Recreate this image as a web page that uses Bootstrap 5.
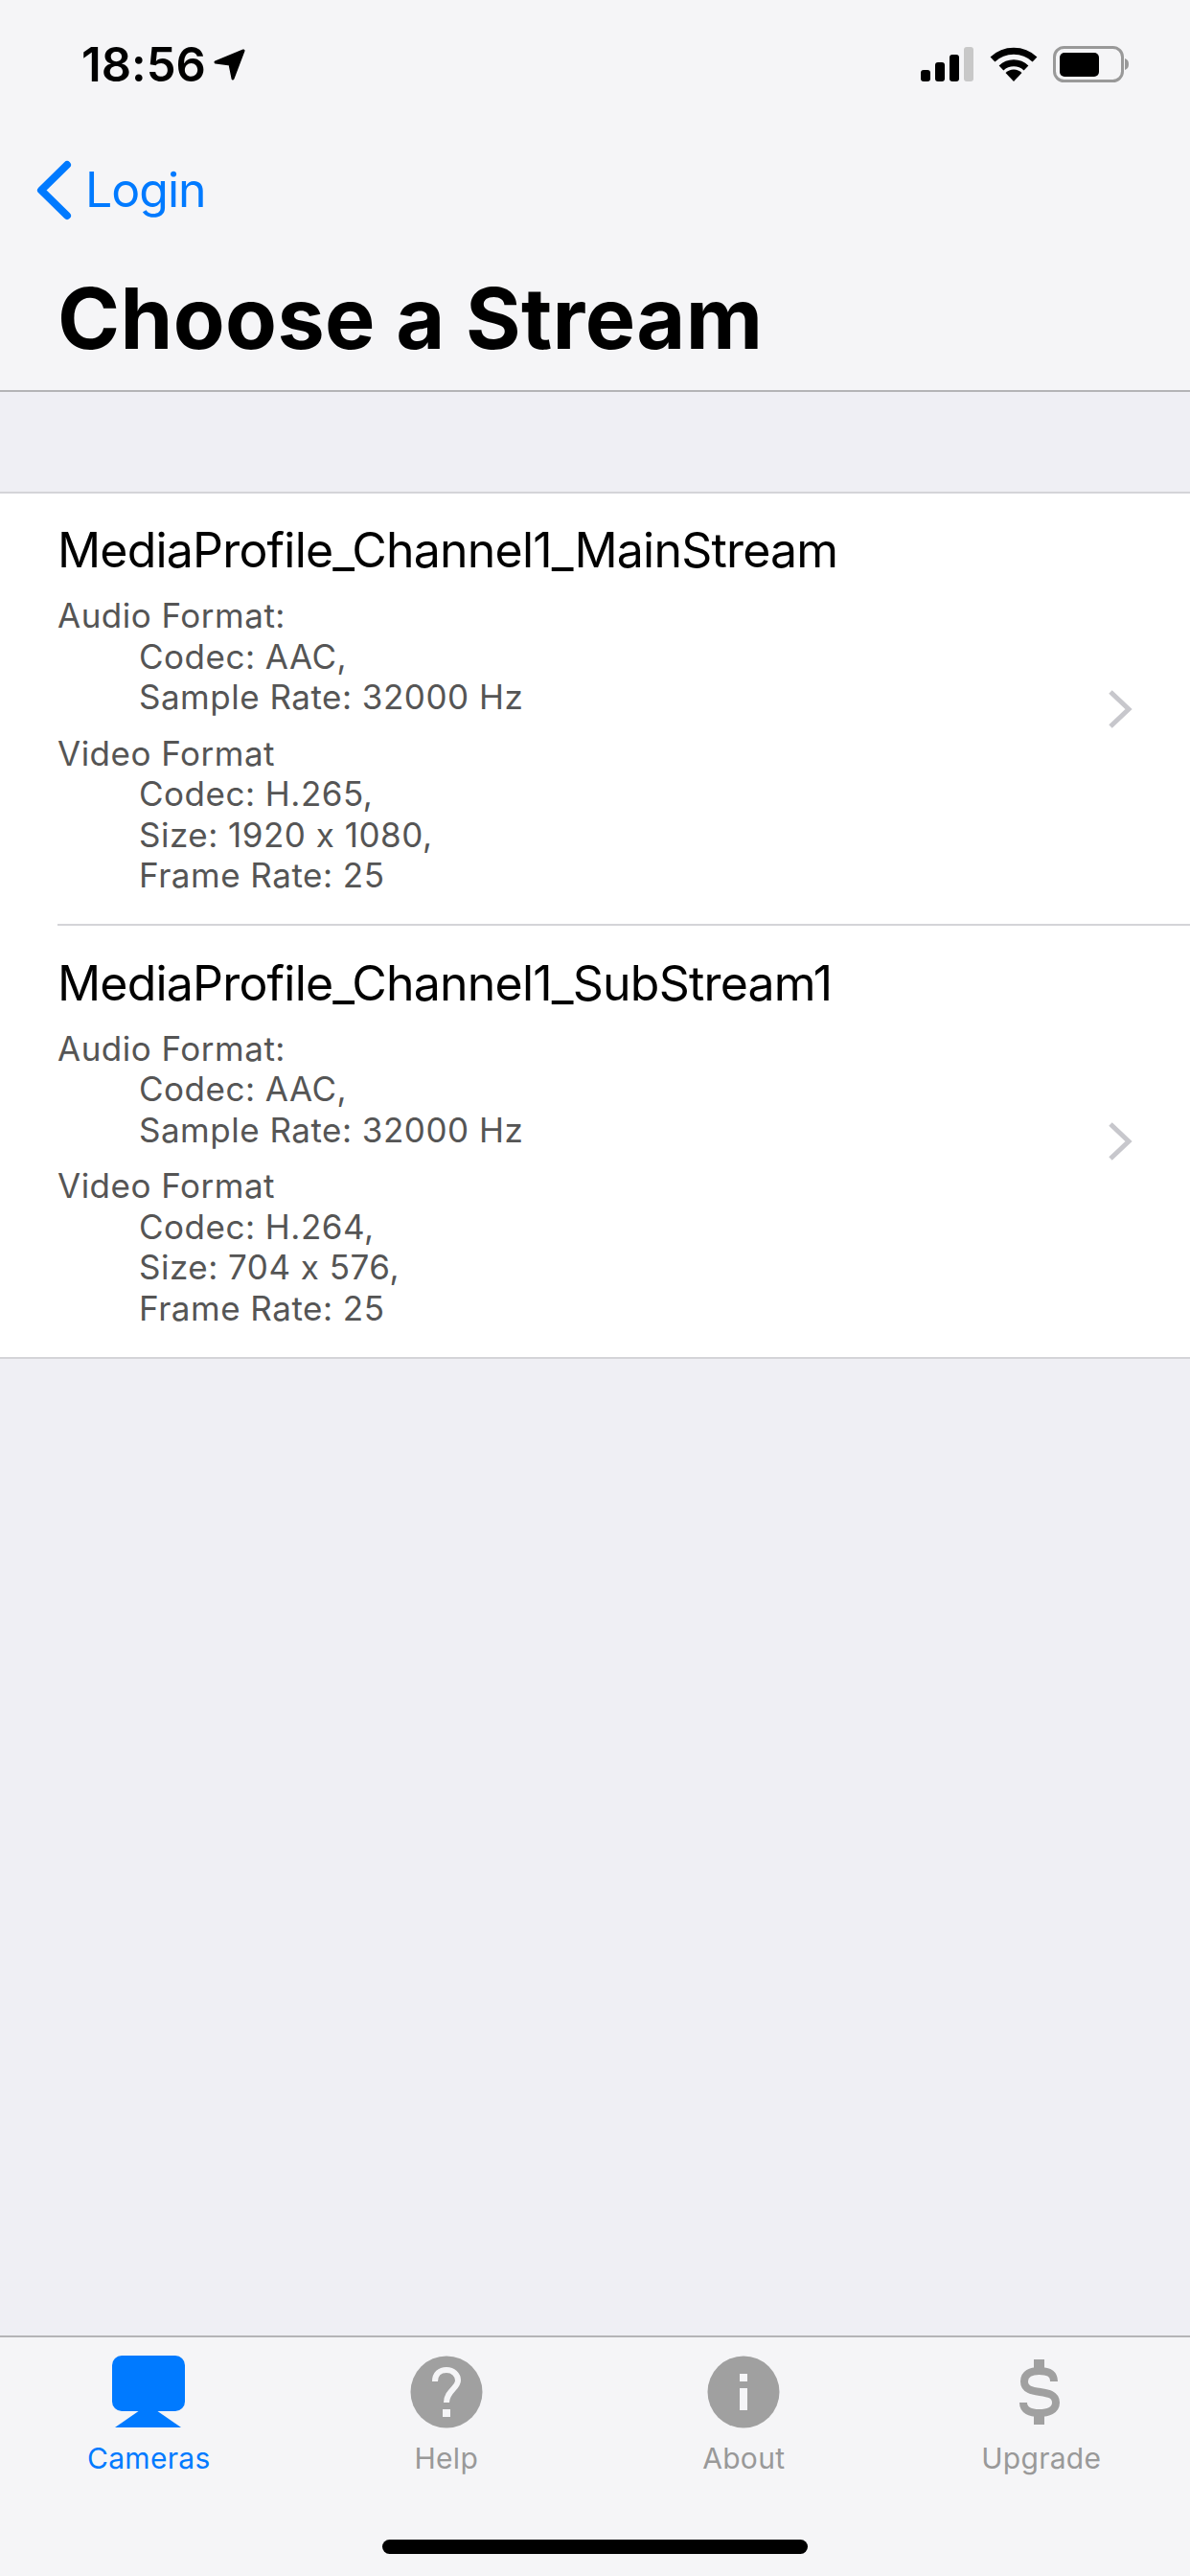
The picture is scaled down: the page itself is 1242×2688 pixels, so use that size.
<!DOCTYPE html>
<html lang="en">

<head>
  <meta charset="UTF-8">
  <title>Choose a Stream</title>
  <link href="https://cdn.jsdelivr.net/npm/bootstrap@5.3.3/dist/css/bootstrap.min.css" rel="stylesheet">
  <style>
    body {
      font-family: Inter, "Liberation Sans", sans-serif;
      font-feature-settings: "calt" 0;
      background-color: #efeff4;
      color: #000;
    }

    .screen {
      width: 1242px;
      height: 2688px;
      overflow: hidden;
    }

    .top-bar {
      background-color: #f5f5f7;
      border-bottom: 2px solid #b4b4b6;
      height: 409px;
    }

    .status-row {
      height: 134px;
      padding: 0 63px 0 85px;
    }

    .clock {
      font-size: 49px;
      font-weight: 600;
      letter-spacing: 0;
      line-height: 1;
    }

    .back-row {
      height: 128px;
      padding-left: 38px;
    }

    .back-link {
      color: #007aff;
      font-size: 50px;
      text-decoration: none;
      letter-spacing: -1px;
      margin-left: 14px;
    }

    .page-title {
      font-size: 88px;
      font-weight: 700;
      letter-spacing: 0.4px;
      line-height: 100px;
      margin: 0;
      padding: 20px 0 0 60px;
    }

    .stream-list {
      margin-top: 104px;
      border-top: 2px solid #d4d4d8;
      border-bottom: 2px solid #d4d4d8;
      border-radius: 0;
    }

    .stream-item {
      background-color: #fff;
      padding: 0 0 0 60px;
      border: 0;
    }

    .stream-body {
      height: 450px;
      padding-right: 60px;
    }

    .stream-item:first-child .stream-body {
      border-bottom: 2px solid #d4d4d8;
      height: 451px;
    }

    .stream-name {
      color: #000;
      font-size: 50px;
      letter-spacing: -0.8px;
      line-height: 60px;
      margin: 0 0 17px;
      font-weight: 400;
    }

    .format-block {
      color: #555;
      font-size: 35px;
      letter-spacing: 0.5px;
      line-height: 42.5px;
      margin: 0 0 16px;
    }

    .format-block div {
      padding-left: 85px;
    }

    .tab-bar {
      background-color: #f5f5f7;
      border-top: 2px solid #b4b4b6;
      height: 251px;
      position: relative;
    }

    .tab-item {
      color: #999;
      font-size: 30px;
      letter-spacing: 0.3px;
      line-height: 36px;
      padding-top: 19px;
      text-decoration: none;
    }

    .tab-item svg {
      display: block;
      margin: 0 auto 13px;
    }

    .tab-active {
      color: #007aff;
    }

    .home-bar {
      position: absolute;
      left: 399px;
      top: 211px;
      width: 444px;
      height: 15px;
      border-radius: 8px;
      background-color: #000;
    }
  </style>
</head>

<body>
  <div class="screen d-flex flex-column">
    <header class="top-bar">
      <div class="status-row d-flex align-items-center justify-content-between">
        <div class="d-flex align-items-center">
          <span class="clock">18:56</span>
          <svg class="ms-2" width="34" height="34" viewBox="0 0 34 34">
            <path d="M31 3 L2 15 L17 17 L20 32 Z" fill="#000" stroke="#000" stroke-width="3" stroke-linejoin="round" />
          </svg>
        </div>
        <div class="d-flex align-items-center">
          <svg width="56" height="36" viewBox="0 0 56 36">
            <rect x="0" y="24" width="10" height="12" rx="3" fill="#000" />
            <rect x="15" y="16" width="10" height="20" rx="3" fill="#000" />
            <rect x="30" y="8" width="10" height="28" rx="3" fill="#000" />
            <rect x="45" y="0" width="10" height="36" rx="3" fill="#c8c8c8" />
          </svg>
          <svg class="wifi" width="50" height="36" viewBox="0 0 50 36" style="margin-left:16px">
            <path d="M3 13 A32 32 0 0 1 47 13" fill="none" stroke="#000" stroke-width="7" />
            <path d="M12 22 A19 19 0 0 1 38 22" fill="none" stroke="#000" stroke-width="7" />
            <path d="M16.500 27 A12 12 0 0 1 33.500 27 L25 36 Z" fill="#000" />
          </svg>
          <svg width="80" height="38" viewBox="0 0 80 38" style="margin-left:16px">
            <rect x="1.500" y="1.500" width="71" height="35" rx="10" fill="none" stroke="#999" stroke-width="3" />
            <rect x="7" y="7" width="41" height="25" rx="5" fill="#000" />
            <path d="M75 13 C78 14 79 16 79 19 C79 22 78 24 75 25 Z" fill="#999" />
          </svg>
        </div>
      </div>
      <div class="back-row d-flex align-items-center">
        <svg width="37" height="63" viewBox="0 0 37 63">
          <path d="M32 5 L5 31.500 L32 58" fill="none" stroke="#007aff" stroke-width="8" stroke-linecap="round" stroke-linejoin="round" />
        </svg>
        <a class="back-link" href="#">Login</a>
      </div>
      <h1 class="page-title">Choose a Stream</h1>
    </header>

    <ul class="list-group stream-list">
      <li class="list-group-item stream-item">
        <div class="stream-body d-flex align-items-center justify-content-between">
          <div>
            <h2 class="stream-name">MediaProfile_Channel1_MainStream</h2>
            <div class="format-block">Audio Format:
              <div>Codec: AAC,</div>
              <div>Sample Rate: 32000 Hz</div>
            </div>
            <div class="format-block mb-0">Video Format
              <div>Codec: H.265,</div>
              <div>Size: 1920 x 1080,</div>
              <div>Frame Rate: 25</div>
            </div>
          </div>
          <svg width="26" height="42" viewBox="0 0 26 42">
            <path d="M3 3 L22 21 L3 39" fill="none" stroke="#c7c7cc" stroke-width="5" />
          </svg>
        </div>
      </li>
      <li class="list-group-item stream-item">
        <div class="stream-body d-flex align-items-center justify-content-between">
          <div>
            <h2 class="stream-name">MediaProfile_Channel1_SubStream1</h2>
            <div class="format-block">Audio Format:
              <div>Codec: AAC,</div>
              <div>Sample Rate: 32000 Hz</div>
            </div>
            <div class="format-block mb-0">Video Format
              <div>Codec: H.264,</div>
              <div>Size: 704 x 576,</div>
              <div>Frame Rate: 25</div>
            </div>
          </div>
          <svg width="26" height="42" viewBox="0 0 26 42">
            <path d="M3 3 L22 21 L3 39" fill="none" stroke="#c7c7cc" stroke-width="5" />
          </svg>
        </div>
      </li>
    </ul>

    <div class="flex-grow-1"></div>

    <nav class="tab-bar row g-0 text-center">
      <a class="tab-item tab-active col-3" href="#">
        <svg width="76" height="76" viewBox="0 0 76 76">
          <rect x="0" y="0" width="76" height="58" rx="10" fill="#007aff" />
          <path d="M29 57 L3 75 L72 75 L46 57 Z" fill="#007aff" />
        </svg>
        Cameras
      </a>
      <a class="tab-item col-3" href="#">
        <svg width="76" height="76" viewBox="0 0 76 76">
          <circle cx="38" cy="38" r="37.500" fill="#a0a0a0" />
          <path d="M26 27 C26 19 31 15 38 15 C45 15 50 20 50 26 C50 34 38 37 38 49" fill="none" stroke="#f5f5f7" stroke-width="6" />
          <rect x="34" y="56" width="8" height="8" fill="#f5f5f7" />
        </svg>
        Help
      </a>
      <a class="tab-item col-3" href="#">
        <svg width="76" height="76" viewBox="0 0 76 76">
          <circle cx="38" cy="38" r="37.500" fill="#a0a0a0" />
          <rect x="34" y="19" width="8" height="8" fill="#f5f5f7" />
          <rect x="34" y="34" width="8" height="23" fill="#f5f5f7" />
        </svg>
        About
      </a>
      <a class="tab-item col-3" href="#">
        <svg width="76" height="76" viewBox="0 0 76 76">
          <path d="M51 27 C51 18 44 16 35.500 16 C27 16 20 19 20 27 C20 44 53 32 53 49 C53 57 45 60 35.500 60 C26 60 19 57 19 49" fill="none" stroke="#a0a0a0" stroke-width="8" />
          <rect x="30" y="4" width="11" height="11" fill="#a0a0a0" />
          <rect x="30" y="61" width="11" height="11" fill="#a0a0a0" />
        </svg>
        Upgrade
      </a>
      <div class="home-bar"></div>
    </nav>
  </div>

  <script src="https://cdn.jsdelivr.net/npm/bootstrap@5.3.3/dist/js/bootstrap.bundle.min.js"></script>
</body>

</html>
